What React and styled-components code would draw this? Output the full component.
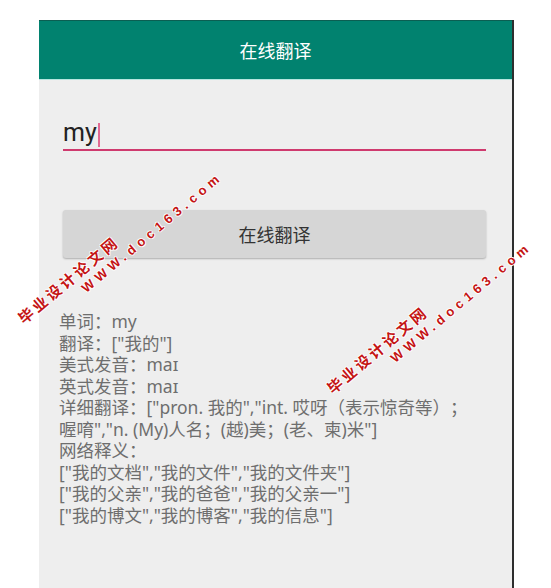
import React from 'react';
import styled, { createGlobalStyle } from 'styled-components';

const GlobalStyle = createGlobalStyle`
  html, body {
    margin: 0;
    padding: 0;
    background: #ffffff;
  }
`;

const Page = styled.div`
  position: relative;
  width: 551px;
  height: 588px;
  overflow: hidden;
  padding: 20px 0 0 39px;
  box-sizing: border-box;
  font-family: Roboto, "Noto Sans CJK SC", sans-serif;
  text-spacing-trim: space-all;
`;

const Screen = styled.div`
  width: 473px;
  height: 568px;
  background: #eeeeee;
  border-right: 2px solid #2e2e2e;
  display: flex;
  flex-direction: column;
`;

const Header = styled.div`
  height: 60px;
  background: #01826f;
  border-top: 1px solid #0b5e52;
  box-sizing: border-box;
  border-bottom: 1px solid #b6e6df;
  display: flex;
  align-items: center;
  justify-content: center;
  color: #ffffff;
  font-size: 18px;
  font-family: "Noto Sans CJK SC", sans-serif;
`;

const Content = styled.div`
  padding: 37px 26px 0 24px;
  display: flex;
  flex-direction: column;
`;

const InputField = styled.div`
  height: 32px;
  border-bottom: 2px solid #cf3a6e;
  display: flex;
  align-items: center;
  font-size: 25px;
  color: #222222;
  line-height: 32px;
`;

const Caret = styled.span`
  display: inline-block;
  width: 2px;
  height: 24px;
  margin-left: 1px;
  background: #e26a93;
  align-self: center;
  transform: translateY(2px);
`;

const Button = styled.div`
  margin-top: 59px;
  height: 48px;
  background: #d6d6d6;
  border-radius: 3px;
  box-shadow: 0 1px 2px rgba(0, 0, 0, 0.28);
  display: flex;
  align-items: center;
  justify-content: center;
  font-size: 18px;
  color: #333333;
  font-family: "Noto Sans CJK SC", sans-serif;
`;

const Result = styled.div`
  margin-top: 53px;
  margin-left: -4px;
  font-family: "Noto Sans", "Noto Sans CJK SC", sans-serif;
  font-size: 17.5px;
  line-height: 21.5px;
  color: #6e6e6e;
  white-space: nowrap;
  text-spacing-trim: space-all;
`;

const Mark = styled.div`
  position: absolute;
  left: ${(p) => p.x}px;
  top: ${(p) => p.y}px;
  transform: rotate(-40deg);
  transform-origin: 0 0;
  color: #c41414;
  font-weight: bold;
  font-size: 15px;
  line-height: 16px;
  white-space: nowrap;
  text-shadow: 1px 0 #fff, -1px 0 #fff, 0 1px #fff, 0 -1px #fff;
  pointer-events: none;
`;

const MarkTitle = styled.div`
  font-family: "Noto Sans CJK SC", sans-serif;
  letter-spacing: 3px;
`;

const MarkUrl = styled.div`
  margin-top: 1.5px;
  padding-left: 68px;
  font-family: "Liberation Sans", sans-serif;
  font-size: 13px;
  letter-spacing: 4.6px;
`;

const lines = [
  '单词：my',
  '翻译：["我的"]',
  '美式发音：maɪ',
  '英式发音：maɪ',
  '详细翻译：["pron. 我的","int. 哎呀（表示惊奇等）；',
  '喔唷","n. (My)人名；(越)美；(老、柬)米"]',
  '网络释义：',
  '["我的文档","我的文件","我的文件夹"]',
  '["我的父亲","我的爸爸","我的父亲一"]',
  '["我的博文","我的博客","我的信息"]',
];

function Watermark({ x, y }) {
  return (
    <Mark x={x} y={y}>
      <MarkTitle>毕业设计论文网</MarkTitle>
      <MarkUrl>WWW.doc163.com</MarkUrl>
    </Mark>
  );
}

export default function App() {
  return (
    <Page>
      <GlobalStyle />
      <Screen>
        <Header>在线翻译</Header>
        <Content>
          <InputField>
            <span>my</span>
            <Caret />
          </InputField>
          <Button>在线翻译</Button>
          <Result>
            {lines.map((l, i) => (
              <div key={i}>{l}</div>
            ))}
          </Result>
        </Content>
      </Screen>
      <Watermark x={15} y={314} />
      <Watermark x={324} y={384} />
    </Page>
  );
}
